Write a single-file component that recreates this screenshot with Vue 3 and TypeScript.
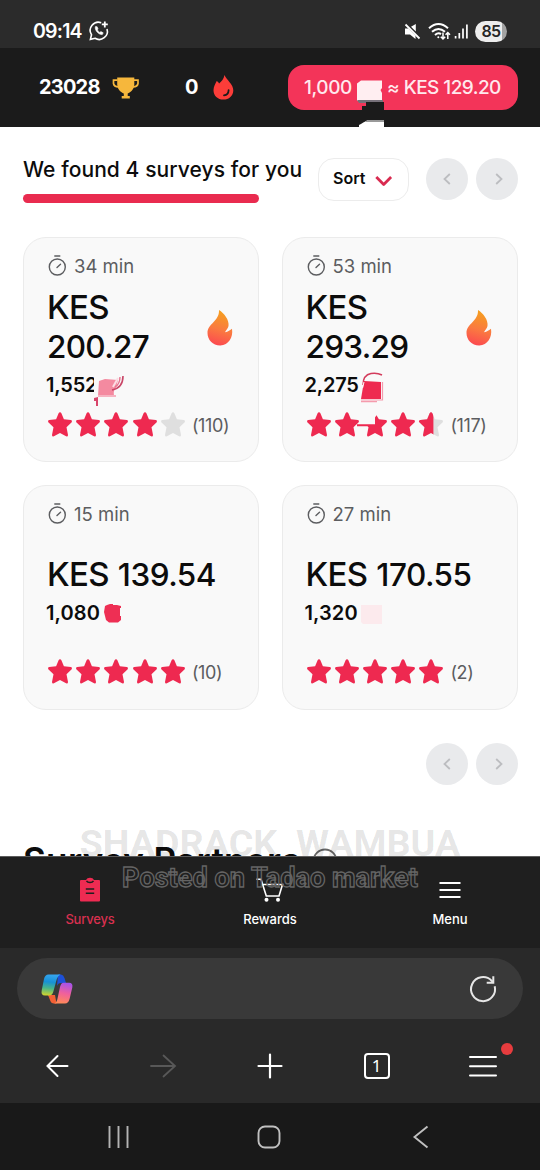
<script setup lang="ts">
type Mark = 'flag' | 'bag' | 'blob' | 'pale'

interface Survey {
  minutes: number
  reward: string[]
  points: string
  mark: Mark
  rating: number
  votes: number
  hot: boolean
}

const surveys: Survey[] = [
  { minutes: 34, reward: ['KES', '200.27'], points: '1,552', mark: 'flag', rating: 4, votes: 110, hot: true },
  { minutes: 53, reward: ['KES', '293.29'], points: '2,275', mark: 'bag', rating: 4.6, votes: 117, hot: true },
  { minutes: 15, reward: ['KES', '139.54'], points: '1,080', mark: 'blob', rating: 5, votes: 10, hot: false },
  { minutes: 27, reward: ['KES', '170.55'], points: '1,320', mark: 'pale', rating: 5, votes: 2, hot: false },
]

const star =
  'M12 .2 Q12.9 .2 13.4 1.3 L15.9 7.3 L22.8 8 Q24.8 8.6 23.7 10.2 L18.5 15.2 L20 22.9 Q20 24.8 18.1 24.3 L12 21.1 L5.9 24.3 Q4 24.8 4 22.9 L5.5 15.2 L.3 10.2 Q-.8 8.6 1.2 8 L8.1 7.3 L10.6 1.3 Q11.1 .2 12 .2 Z'
const brokenStar =
  'M13.5 3.2 L15.9 7.3 L22.8 8 Q24.8 8.6 23.7 10.2 L18.5 15.2 L20 22.9 Q20 24.8 18.1 24.3 L12 21.1 L5.9 24.3 Q4 24.8 4 22.9 L5.5 15.2 L4.5 14.3 L-6 14.3 V12.2 H12 V5.5 Z'

function starPath(s: Survey, n: number): string {
  return s.mark === 'bag' && n === 3 ? brokenStar : star
}

function fill(rating: number, n: number): number {
  return Math.max(0, Math.min(1, rating - n + 1)) * 24
}
</script>

<template>
  <div class="screen">
    <header class="status">
      <span class="clock">09:14</span>
      <svg class="wa" width="20" height="20" viewBox="0 0 20 20" fill="none" stroke="#fff" stroke-width="1.6">
        <path d="M12.2 1.7A8.2 8.2 0 0 0 2.5 13.8L1.4 18.4L6 17.3A8.2 8.2 0 0 0 18 7.9" />
        <path d="M6.4 5.6C5.4 9 9.6 14 13.3 13.6L14.2 11.8L11.9 10.6L10.8 11.4C9.7 10.9 8.8 9.9 8.4 8.9L9 7.8L8.1 5.7Z" fill="#fff" stroke-width=".6" />
        <path d="M15.8.4V6.4M12.8 3.4H18.8" stroke-width="1.8" />
      </svg>
      <span class="grow"></span>
      <svg width="17" height="17" viewBox="0 0 17 17">
        <path d="M1 5.5H4.3L11.5 12.7V16L6 11.5H1Z M7 3.7L11.8 1V8.5Z" fill="#fff" />
        <path d="M1.5 1.5L15.5 15.5" stroke="#fff" stroke-width="1.8" />
      </svg>
      <svg class="wifi" width="23" height="19" viewBox="0 0 23 19" fill="none" stroke="#fff" stroke-width="2">
        <path d="M1 6.2Q10.5-2.2 20 6.2M4 9.8Q10.5 4.2 17 9.8M7 13Q10.3 10.2 13 12.1" />
        <circle cx="10.3" cy="15.3" r="1" fill="#fff" stroke="none" />
        <path d="M15 10.5V17M12.8 14.8L15 17L17.2 14.8M19.8 17V10.5M17.6 12.7L19.8 10.5L22 12.7" stroke-width="1.5" />
      </svg>
      <svg class="signal" width="15" height="15" viewBox="0 0 15 15" stroke="#fff" stroke-width="1.7">
        <path d="M1.6 12V14.5M5.3 9V14.5M9 4.5V14.5M12.9.5V14.5" />
      </svg>
      <span class="battery">85</span>
    </header>

    <section class="topbar">
      <span class="score">23028</span>
      <svg class="trophy" width="28" height="22" viewBox="0 0 28 22">
        <path d="M5.2.5H22.3V7.5C22 12.5 18.6 15.6 15.7 16.4V19H17.8V21.5H9.7V19H11.8V16.4C8.9 15.6 5.5 12.5 5.2 7.5Z" fill="#f6b73c" />
        <path d="M5.5 3.2H1.5V6.5Q2 9.6 6.5 10M22 3.2H26V6.5Q25.5 9.6 21 10" fill="none" stroke="#f6b73c" stroke-width="1.7" />
      </svg>
      <span class="streak">0</span>
      <svg class="fire" width="21" height="25" viewBox="0 0 21 25">
        <path d="M11.5 0C13.2 4.6 20.5 9.3 20.3 15.5C20.1 21 16 24.6 10.3 24.6C4.8 24.6.5 21 .5 15.3C.5 11.6 2.2 9 3.7 6C4.7 6.5 5.6 7.4 6.1 8.6C8.7 6.2 10.7 4 11.5 0Z" fill="#fc3d39" />
        <path d="M15.6 15.2C15.5 18.1 13.7 20 11 20.4" fill="none" stroke="#1b1b1b" stroke-width="1.8" stroke-linecap="round" />
      </svg>
      <div class="rate">
        <span class="rate-a">1,000</span>
        <svg class="rate-mark" width="27" height="50" viewBox="0 0 27 50">
          <path d="M4 1.5H25V9L23.5 11L25 14V22H0V4.5Z" fill="#ffeef1" />
          <path d="M0 21H26V24H2Z" fill="#77717a" />
          <path d="M9 23H27V41H9V31H5V27H9Z" fill="#1b1b1b" />
          <path d="M2 46Q7 43 9 42H27V50H2Z" fill="#fff" />
          <path d="M10 41H27V43H8Z" fill="#999" />
        </svg>
        <span class="rate-b">≈ KES 129.20</span>
      </div>
    </section>

    <main class="content">
      <div class="toolbar">
        <h1 class="found">We found 4 surveys for you</h1>
        <button class="sort">
          <span>Sort</span>
          <svg width="18" height="12" viewBox="0 0 18 12" fill="none" stroke="#d92b50" stroke-width="2.8" stroke-linejoin="round">
            <path d="M1.3 2L8.7 9.4L16.1 2" />
          </svg>
        </button>
        <div class="pager">
          <span class="round"><svg width="8" height="12" viewBox="0 0 8 12"><path d="M6.8 1L1.5 6L6.8 11" /></svg></span>
          <span class="round"><svg width="8" height="12" viewBox="0 0 8 12"><path d="M3.2 1L8.5 6L3.2 11" /></svg></span>
        </div>
      </div>
      <div class="underline"></div>

      <div class="grid">
        <article v-for="s in surveys" :key="s.points" class="card" :class="{ hot: s.hot }">
          <div class="time">
            <svg width="19" height="22" viewBox="0 0 19 22" fill="none" stroke="#5c5d60" stroke-width="1.4" stroke-linecap="round">
              <circle cx="9.3" cy="12" r="8" />
              <path d="M6.8 1H11.8M9 12.5L12.5 9.2" />
            </svg>
            <span>{{ s.minutes }} min</span>
          </div>
          <div class="reward">
            <div class="amount">
              <span class="currency">{{ s.reward[0] }}</span>
              <span class="sum">{{ s.reward[1] }}</span>
            </div>
            <svg v-if="s.hot" class="flame" width="26" height="36" viewBox="0 0 26 36">
              <defs>
                <linearGradient id="flame" x1=".6" y1="0" x2=".4" y2="1">
                  <stop offset="0" stop-color="#f5a21e" />
                  <stop offset=".55" stop-color="#fa7a40" />
                  <stop offset="1" stop-color="#fc4a50" />
                </linearGradient>
              </defs>
              <path d="M12 0C17 3 22.5 10 21.5 16C21 18.4 19 20.2 18 22.2C21 21.8 23.3 20.3 25 18.8C26.4 27.6 21.5 35.3 13.3 35.4C5.8 35.5.5 30 .5 23C.5 13.5 12.5 11.5 12 0Z" fill="url(#flame)" />
            </svg>
          </div>
          <div class="points">
            <span :class="{ cut: s.mark === 'flag' }">{{ s.points }}</span>
            <svg v-if="s.mark === 'flag'" class="mark" width="31" height="34" viewBox="0 0 31 34">
              <path d="M5 13L11 11L24 12L22 20Q19 22 20 28H4Z" fill="#f48aa0" />
              <path d="M4 28H22" stroke="#f6b3c1" stroke-width="2" />
              <path d="M24 10L19 19" stroke="#fbdde3" stroke-width="2" />
              <path d="M29 8Q29 20 18 22" fill="none" stroke="#c94768" stroke-width="1.6" />
              <path d="M26 9Q26 16 21 19" fill="none" stroke="#e6738e" stroke-width="1.4" />
              <path d="M0 30L4 29V38H2V33H0Z" fill="#d9466b" />
            </svg>
            <svg v-else-if="s.mark === 'bag'" class="mark" width="25" height="34" viewBox="0 0 25 34">
              <path d="M4 17Q4 7 12 5.5Q18 4.5 23 7" fill="none" stroke="#d33c5c" stroke-width="1.5" />
              <path d="M5 13L22 14V31H2Z" fill="#ee2a50" />
              <path d="M5 14L3.6 20" stroke="#fff" stroke-width="1" />
              <path d="M23.5 14V32H2M2 33.6H18" fill="none" stroke="#f59bad" stroke-width="1.2" />
            </svg>
            <svg v-else-if="s.mark === 'blob'" class="mark" width="25" height="34" viewBox="0 0 25 34">
              <path d="M7 9L10 8H13V9H17L21 10V12H20V20H21V24L18 26.5H9L6 24L5 20L4 16L5 10Z" fill="#ee2f54" />
            </svg>
            <svg v-else class="mark" width="25" height="34" viewBox="0 0 25 34">
              <path d="M3 9H24V28H5L3 26Z" fill="#fceaed" />
            </svg>
          </div>
          <div class="rating">
            <svg v-for="n in 5" :key="n" class="star" width="24" height="25" viewBox="0 0 24 25">
              <clipPath :id="`part-${s.votes}-${n}`">
                <rect x="-8" y="0" :width="fill(s.rating, n) < 24 ? 8 + fill(s.rating, n) : 34" height="25" />
              </clipPath>
              <path v-if="fill(s.rating, n) < 24" :d="star" fill="#dfdfdf" />
              <path v-if="fill(s.rating, n) > 0" :d="starPath(s, n)" fill="#ee2950" :clip-path="`url(#part-${s.votes}-${n})`" />
            </svg>
            <span class="votes">({{ s.votes }})</span>
          </div>
        </article>
      </div>

      <div class="pager bottom">
        <span class="round"><svg width="8" height="12" viewBox="0 0 8 12"><path d="M6.8 1L1.5 6L6.8 11" /></svg></span>
        <span class="round"><svg width="8" height="12" viewBox="0 0 8 12"><path d="M3.2 1L8.5 6L3.2 11" /></svg></span>
      </div>

      <div class="partners">
        <h2>Survey Partners</h2>
        <svg width="26" height="26" viewBox="0 0 26 26" fill="none" stroke="#666" stroke-width="1.8">
          <circle cx="13" cy="14" r="11.5" />
          <path d="M13 13V18" />
        </svg>
      </div>
    </main>

    <nav class="tabs">
      <div class="tab active">
        <svg width="22" height="26" viewBox="0 0 22 26">
          <path d="M2 3H7Q8 .7 11 .7Q14 .7 15 3H20Q21 3 21 4V23.5Q21 24.5 20 24.5H2Q1 24.5 1 23.5V4Q1 3 2 3Z" fill="#ee2b52" />
          <path d="M7.5 3.8Q8.5 5.5 11 5.5Q13.5 5.5 14.5 3.8M6.8 12H15.2M6.8 16.2H15.2" fill="none" stroke="#1f1f1f" stroke-width="1.5" />
        </svg>
        <span>Surveys</span>
      </div>
      <div class="tab">
        <svg width="28" height="26" viewBox="0 0 28 26" fill="none" stroke="#fff" stroke-width="1.6">
          <path d="M.5 2.2H5L10.3 19H23L26.5 7.5H6.7" />
          <circle cx="10.5" cy="22.7" r="2" fill="#fff" stroke="none" />
          <circle cx="22" cy="22.7" r="2" fill="#fff" stroke="none" />
        </svg>
        <span>Rewards</span>
      </div>
      <div class="tab">
        <svg width="22" height="26" viewBox="0 0 22 26" stroke="#fff" stroke-width="2">
          <path d="M.5 6H21.5M.5 13H21.5M.5 20H21.5" />
        </svg>
        <span>Menu</span>
      </div>
    </nav>

    <section class="browser">
      <div class="address">
        <svg width="32" height="30" viewBox="0 0 32 30">
          <defs>
            <linearGradient id="cool" x1=".4" y1="0" x2=".3" y2="1">
              <stop offset="0" stop-color="#35a5ef" />
              <stop offset=".35" stop-color="#1791d6" />
              <stop offset=".65" stop-color="#48b58a" />
              <stop offset="1" stop-color="#d2d52e" />
            </linearGradient>
            <linearGradient id="warm" x1=".6" y1="0" x2=".4" y2="1">
              <stop offset="0" stop-color="#a653ea" />
              <stop offset=".5" stop-color="#f0609c" />
              <stop offset="1" stop-color="#ff8a58" />
            </linearGradient>
          </defs>
          <path d="M17 .5H20Q22.5.8 23.5 4L25 9H20Q17 9 16 12Z" fill="#1d50d8" />
          <path d="M7 21H14L15.5 29.5H13Q10 29.5 9 26Z" fill="#f36035" />
          <path d="M7.5.5H19.5Q16.8 1.5 15.8 5L12.5 17Q11.5 21.5 8 21.5H4Q-.2 21.5.7 16.5L3 5Q4 .5 7.5.5Z" fill="url(#cool)" />
          <path d="M22.5 8.7H28Q32.2 8.7 31.3 13.5L28.7 24.5Q27.5 29.5 24 29.5H13Q15.5 29 16.3 25.5L19 13Q20 8.7 22.5 8.7Z" fill="url(#warm)" />
        </svg>
        <svg width="28" height="28" viewBox="0 0 28 28" fill="none" stroke="#e6e6e6" stroke-width="2">
          <path d="M25.7 11.2A12 12 0 1 1 22.6 5.7L24.4 7.5" />
          <path d="M24.3 1.2V7.8H17.7" />
        </svg>
      </div>
      <div class="actions">
        <span><svg width="24" height="24" viewBox="0 0 24 24" fill="none" stroke="#fff" stroke-width="2" stroke-linecap="round"><path d="M2.5 12H22.5M12.5 2L2.5 12L12.5 22" /></svg></span>
        <span><svg width="26" height="24" viewBox="0 0 26 24" fill="none" stroke="#585858" stroke-width="1.8" stroke-linecap="round"><path d="M1 12H25M13.5 1.5L25 12L13.5 22.5" /></svg></span>
        <span><svg width="26" height="26" viewBox="0 0 26 26" stroke="#fff" stroke-width="2.2" stroke-linecap="round"><path d="M1.5 13H24.5M13 1.5V24.5" /></svg></span>
        <span><i class="count">1</i></span>
        <span class="more">
          <svg width="30" height="24" viewBox="0 0 30 24" stroke="#fff" stroke-width="2" stroke-linecap="round"><path d="M2 3H28M2 12.2H28M2 21.4H28" /></svg>
          <b class="dot"></b>
        </span>
      </div>
    </section>

    <footer class="system">
      <svg width="22" height="22" viewBox="0 0 22 22" stroke="#b4b4b4" stroke-width="1.9"><path d="M2.5 0V22M11.5 0V22M20.5 0V22" /></svg>
      <svg class="home" width="24" height="24" viewBox="0 0 24 24" fill="none" stroke="#c0c0c0" stroke-width="1.9"><rect x="1.5" y="1.5" width="21" height="21" rx="6.5" /></svg>
      <svg width="16" height="24" viewBox="0 0 16 24" fill="none" stroke="#c0c0c0" stroke-width="1.9"><path d="M15.5 1.5L2.5 12L15.5 22.5" /></svg>
    </footer>

    <div class="overlay">
      <div class="name">SHADRACK&nbsp; WAMBUA</div>
      <div class="posted">Posted on Tadao market</div>
    </div>
  </div>
</template>

<style>
body {
  margin: 0;
  background: #fff;
}
</style>

<style scoped>
.screen {
  position: relative;
  width: 540px;
  height: 1170px;
  overflow: hidden;
  display: flex;
  flex-direction: column;
  background: #fff;
  color: #0c0c0c;
  font-family: Inter, 'Liberation Sans', sans-serif;
  white-space: nowrap;
}
.screen * {
  box-sizing: border-box;
}
svg {
  display: block;
  flex: none;
  overflow: visible;
}
.grow {
  flex: 1;
}
.status {
  flex: none;
  height: 48px;
  background: #2b2b2b;
  color: #fff;
  display: flex;
  align-items: center;
  padding: 14px 33px 0;
}
.clock {
  width: 56px;
  font-size: 19.5px;
  font-weight: 600;
  letter-spacing: -0.8px;
}
.wifi {
  margin-left: 7px;
}
.signal {
  margin-left: 3px;
}
.battery {
  margin-left: 6px;
  width: 32px;
  height: 21px;
  border-radius: 11px;
  background: linear-gradient(90deg, #ededed 84%, #a3a3a3 84%);
  color: #262626;
  font-size: 16px;
  font-weight: 600;
  letter-spacing: -0.6px;
  line-height: 21px;
  text-align: center;
}
.topbar {
  flex: none;
  height: 79px;
  padding: 0 22px 0 39px;
  background: #1b1b1b;
  color: #fff;
  display: flex;
  align-items: center;
}
.score {
  width: 73px;
  padding-bottom: 2px;
  font-size: 20px;
  font-weight: 700;
  letter-spacing: -0.8px;
}
.streak {
  margin-left: 45px;
  width: 28px;
  padding-bottom: 2px;
  font-size: 20px;
  font-weight: 700;
}
.rate {
  margin-left: auto;
  width: 230px;
  height: 45px;
  border-radius: 16px;
  background: #f33459;
  color: #ffe9ed;
  display: flex;
  align-items: center;
  padding-left: 16px;
  font-size: 19px;
  font-weight: 500;
}
.rate-a {
  width: 53px;
  padding-bottom: 1px;
  letter-spacing: -0.4px;
}
.rate-mark {
  width: 27px;
  height: 50px;
  margin: 32px 3px 0 0;
}
.rate-b {
  padding-bottom: 1px;
  letter-spacing: -0.55px;
}
.content {
  flex: none;
  height: 729px;
  overflow: hidden;
  padding: 31px 22px 0 23px;
}
.toolbar {
  display: flex;
  height: 43px;
}
.found {
  margin: 0;
  width: 295px;
  font-size: 21px;
  line-height: 23px;
  font-weight: 500;
  letter-spacing: 0.08px;
}
.sort {
  width: 91px;
  height: 43px;
  border: 1px solid #ececec;
  border-radius: 16px;
  background: #fff;
  padding: 0 15px 3px 14px;
  display: flex;
  align-items: center;
  justify-content: space-between;
  color: #0c0c0c;
  font-family: inherit;
  font-size: 16px;
  font-weight: 600;
}
.sort svg {
  margin-top: 5px;
}
.pager {
  margin-left: auto;
  display: flex;
  gap: 8px;
}
.round {
  width: 42px;
  height: 42px;
  border-radius: 50%;
  background: #e9eaec;
  display: flex;
  align-items: center;
  justify-content: center;
}
.round path {
  fill: none;
  stroke: #bcbdc0;
  stroke-width: 1.8;
}
.underline {
  margin-top: -7px;
  width: 236px;
  height: 9px;
  border-radius: 5px;
  background: #e92b4f;
}
.grid {
  margin-top: 34px;
  display: grid;
  grid-template-columns: 236px 236px;
  grid-template-rows: 225px 225px;
  gap: 23px 22.5px;
}
.card {
  border: 1px solid #ebebeb;
  border-radius: 23px;
  background: #f9f9f9;
  padding: 17px 23px 0;
}
.time {
  display: flex;
  align-items: center;
  gap: 7px;
  height: 22px;
  margin-left: 1px;
  color: #5c5d60;
  font-size: 18.5px;
}
.reward {
  display: flex;
  align-items: center;
  justify-content: space-between;
  height: 43px;
  margin-top: 28px;
}
.hot .reward {
  height: 79px;
  margin-top: 11px;
}
.amount {
  display: flex;
  align-items: baseline;
  gap: 9px;
  font-weight: 500;
  line-height: 39px;
}
.hot .amount {
  flex-direction: column;
  gap: 0;
  padding-bottom: 1px;
}
.currency {
  font-size: 33px;
  letter-spacing: -0.7px;
}
.sum {
  font-size: 31.5px;
  letter-spacing: -0.5px;
}
.hot .sum {
  letter-spacing: -0.7px;
}
.flame {
  margin: 1px 2px 0 0;
}
.points {
  display: flex;
  align-items: center;
  height: 34px;
  margin-left: -1px;
  font-size: 20px;
  font-weight: 600;
  letter-spacing: 0.1px;
}
.hot .points {
  margin-top: 1px;
  letter-spacing: -0.2px;
}
.points .cut {
  width: 48px;
  overflow: hidden;
}
.rating {
  display: flex;
  align-items: center;
  gap: 4.2px;
  height: 26px;
  margin: 28px 0 0 1px;
}
.hot .rating {
  margin-top: 9px;
}
.votes {
  margin: 2px 0 0 3px;
  color: #5c5d60;
  font-size: 18px;
  letter-spacing: -0.4px;
}
.bottom {
  margin-top: 33px;
  justify-content: flex-end;
}
.partners {
  display: flex;
  align-items: center;
  gap: 11px;
  margin-top: 55px;
}
.partners h2 {
  margin: 0;
  font-size: 35px;
  font-weight: 600;
  line-height: 40px;
  letter-spacing: 0.35px;
}
.tabs {
  flex: none;
  height: 92px;
  background: #1f1f1f;
  border-top: 1px solid #5c5c5c;
  display: grid;
  grid-template-columns: repeat(3, 1fr);
  color: #fff;
}
.tab {
  display: flex;
  flex-direction: column;
  align-items: center;
  padding-top: 20px;
  gap: 8px;
  font-size: 13px;
  font-weight: 500;
  line-height: 16px;
}
.active {
  color: #d8304f;
}
.active span {
  letter-spacing: -0.2px;
}
.browser {
  flex: none;
  height: 155px;
  background: #292929;
  padding-top: 10px;
}
.address {
  margin: 0 17px;
  height: 61px;
  border-radius: 31px;
  background: #393939;
  display: flex;
  align-items: center;
  justify-content: space-between;
  padding: 0 26px 0 24px;
}
.actions {
  display: flex;
  height: 84px;
  padding: 0 3.5px;
  margin-top: 5px;
}
.actions > span {
  flex: 1;
  display: flex;
  align-items: center;
  justify-content: center;
}
.count {
  width: 26px;
  height: 26px;
  border: 2px solid #fff;
  border-radius: 4px;
  color: #fff;
  font: 400 17px/22px 'Noto Sans', sans-serif;
  text-align: center;
}
.more {
  position: relative;
}
.dot {
  position: absolute;
  left: 71px;
  top: 19px;
  width: 12px;
  height: 12px;
  border-radius: 50%;
  background: #e63c3e;
}
.system {
  flex: none;
  height: 67px;
  background: #191919;
  display: flex;
  align-items: center;
  justify-content: space-between;
  padding: 1px 112px 0 107px;
}
.home {
  margin-right: 3px;
}
.overlay {
  position: absolute;
  left: 0;
  right: 0;
  top: 822px;
  text-align: center;
  font-family: Roboto, sans-serif;
}
.name {
  height: 40px;
  line-height: 43px;
  font-size: 37.7px;
  font-weight: 700;
  color: rgba(0, 0, 0, 0.11);
}
.posted {
  line-height: 32px;
  font-size: 27.1px;
  font-weight: 700;
  color: transparent;
  -webkit-text-stroke: 1.3px #646464;
}
</style>
